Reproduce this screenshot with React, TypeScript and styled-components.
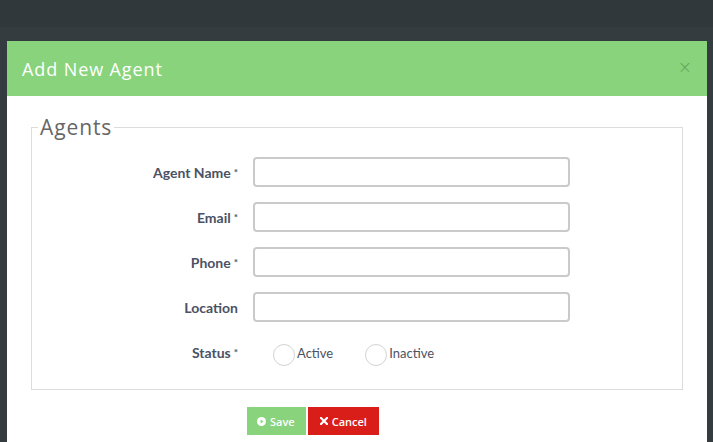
import React from "react";
import styled, { createGlobalStyle } from "styled-components";

const Global = createGlobalStyle`
  html, body { margin: 0; padding: 0; }
  body {
    background: #353c3f;
    font-family: Lato, "Open Sans", sans-serif;
    width: 713px;
    height: 442px;
    overflow: hidden;
  }
`;

const Page = styled.div`
  position: relative;
  width: 713px;
  height: 442px;
  overflow: hidden;
  background: #353c3f;
`;

const TopBand = styled.div`
  height: 27px;
  background: #31383b;
`;

const Backdrop = styled.div`
  display: flex;
  flex-direction: column;
  padding: 14px 6px 0 7px;
`;

const Modal = styled.div`
  width: 700px;
  background: #fff;
  display: flex;
  flex-direction: column;
`;

const Header = styled.div`
  height: 55px;
  background: #88d37c;
  display: flex;
  align-items: center;
  justify-content: space-between;
  padding: 0 15px 0 15px;
  box-sizing: border-box;
`;

const Title = styled.h4`
  margin: 0;
  color: #fff;
  font-family: "Open Sans", sans-serif;
  font-weight: 400;
  font-size: 18px;
  letter-spacing: 0.9px;
`;

const Close = styled.span`
  color: #62a35a;
  font-family: "DejaVu Sans", sans-serif;
  font-size: 17px;
  font-weight: 300;
  line-height: 1;
  margin-top: -2px;
`;

const Body = styled.div`
  padding: 20px 24px 8px 24px;
`;

const Fieldset = styled.fieldset`
  margin: 0;
  border: 1px solid #dcdcdc;
  padding: 19px 0 21px 0;
  min-width: 0;
`;

const Legend = styled.legend`
  margin-left: 6px;
  padding: 0 2px 0 2px;
  font-family: "Open Sans", sans-serif;
  font-weight: 400;
  font-size: 21px;
  letter-spacing: 0.9px;
  color: #666;
  line-height: 22px;
`;

const Grid = styled.div`
  display: grid;
  grid-template-columns: 206px 317px;
  column-gap: 15px;
  row-gap: 15px;
  align-items: center;
`;

const Label = styled.label`
  text-align: right;
  font-family: Lato, sans-serif;
  font-weight: 700;
  font-size: 14px;
  color: #4b5264;
`;

const Req = styled.span`
  font-size: 10px;
  vertical-align: 2px;
  margin-left: 3px;
`;

const Input = styled.input`
  box-sizing: border-box;
  width: 317px;
  height: 30px;
  border: 2px solid #cacaca;
  border-radius: 4px;
  padding: 0 8px;
  background: #fff;
  outline: none;
`;

const RadioGroup = styled.div`
  display: flex;
  align-items: center;
  gap: 32px;
  padding-left: 20px;
  height: 30px;
  margin-top: 1px;
`;

const RadioOption = styled.label`
  display: flex;
  align-items: center;
  gap: 2px;
  font-family: Lato, sans-serif;
  font-size: 13px;
  color: #4b5264;
`;

const Circle = styled.span`
  box-sizing: border-box;
  width: 22px;
  height: 22px;
  border-radius: 50%;
  border: 1px solid #d3d3d3;
  margin-top: 4px;
  background: #fff;
`;

const OptionText = styled.span`
  margin-top: -1px;
`;

const Actions = styled.div`
  display: flex;
  gap: 2px;
  padding: 17px 0 0 216px;
`;

const Button = styled.button<{ $variant: "save" | "cancel" }>`
  height: 28px;
  border: none;
  border-radius: 0;
  padding: 0 ${(p) => (p.$variant === "save" ? "11px 0 10px" : "12px")};
  background: ${(p) => (p.$variant === "save" ? "#88d37c" : "#d91e1a")};
  color: #fff;
  font-family: "Open Sans", sans-serif;
  font-weight: 600;
  font-size: 11px;
  display: flex;
  align-items: center;
  gap: 4px;
`;

const PlayIcon = () => (
  <svg width="9" height="9" viewBox="0 0 10 10">
    <circle cx="5" cy="5" r="5" fill="#fff" />
    <path d="M4 2.8 L7.2 5 L4 7.2 Z" fill="#88d37c" />
  </svg>
);

const TimesIcon = () => (
  <svg width="8" height="8" viewBox="0 0 8 8">
    <path d="M1 1 L7 7 M7 1 L1 7" stroke="#fff" strokeWidth="2.2" strokeLinecap="square" />
  </svg>
);

const fields = [
  { label: "Agent Name", req: true },
  { label: "Email", req: true },
  { label: "Phone", req: true },
  { label: "Location", req: false },
];

export default function App() {
  return (
    <Page>
      <Global />
      <TopBand />
      <Backdrop>
        <Modal>
          <Header>
            <Title>Add New Agent</Title>
            <Close>×</Close>
          </Header>
          <Body>
            <Fieldset>
              <Legend>Agents</Legend>
              <Grid>
                {fields.map((f) => (
                  <React.Fragment key={f.label}>
                    <Label>
                      {f.label}
                      {f.req && <Req>*</Req>}
                    </Label>
                    <Input type="text" />
                  </React.Fragment>
                ))}
                <Label>
                  Status<Req>*</Req>
                </Label>
                <RadioGroup>
                  <RadioOption>
                    <Circle />
                    <OptionText>Active</OptionText>
                  </RadioOption>
                  <RadioOption>
                    <Circle />
                    <OptionText>Inactive</OptionText>
                  </RadioOption>
                </RadioGroup>
              </Grid>
            </Fieldset>
            <Actions>
              <Button $variant="save">
                <PlayIcon />
                Save
              </Button>
              <Button $variant="cancel">
                <TimesIcon />
                Cancel
              </Button>
            </Actions>
          </Body>
        </Modal>
      </Backdrop>
    </Page>
  );
}
